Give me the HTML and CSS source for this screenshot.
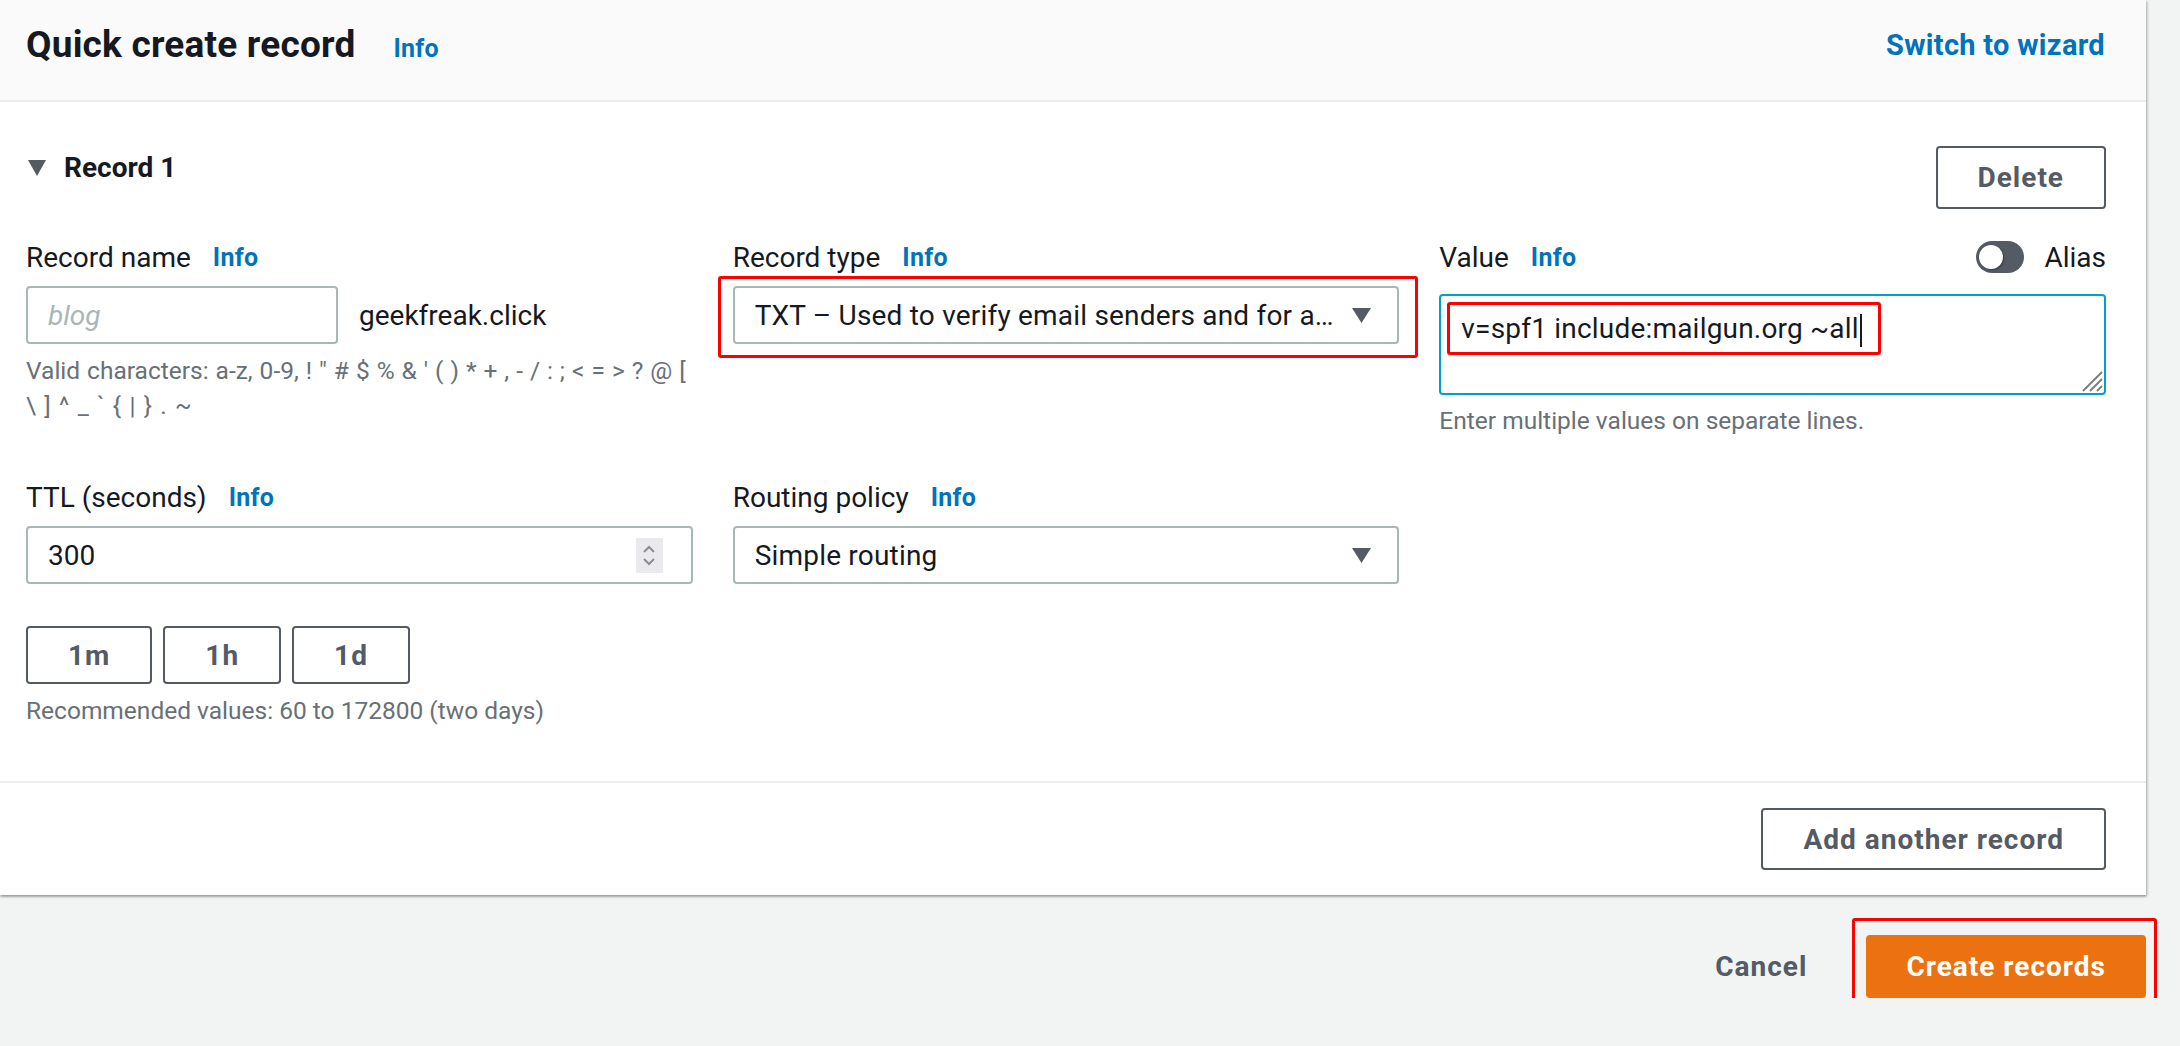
FILE: index.html
```html
<!DOCTYPE html>
<html lang="en">
<head>
<meta charset="utf-8">
<title>Quick create record</title>
<link rel="stylesheet" href="styles.css">
</head>
<body>
<div class="page">
  <section class="card">
    <header class="card-header">
      <div class="title-group">
        <h2 class="title">Quick create record</h2>
        <a class="info info-title">Info</a>
      </div>
      <a class="link-strong">Switch to wizard</a>
    </header>

    <div class="card-body">
      <div class="record-head">
        <div class="record-title">
          <svg class="expand-caret" width="18" height="16" viewBox="0 0 18 16"><polygon points="0,0 18,0 9,16" fill="#545b64"/></svg>
          <span>Record 1</span>
        </div>
        <button class="btn btn-lg">Delete</button>
      </div>

      <div class="form-grid">
        <div class="field">
          <div class="label-row"><span class="label">Record name</span><a class="info">Info</a></div>
          <div class="control name-row">
            <div class="input name-input"><span class="placeholder">blog</span></div>
            <span class="domain">geekfreak.click</span>
          </div>
          <p class="help help-chars"><span class="help-line">Valid characters: a-z, 0-9, ! " # $ % &amp; ' ( ) * + , - / : ; &lt; = &gt; ? @ [</span><span class="help-line">\ ] ^ _ ` { | } . ~</span></p>
        </div>

        <div class="field">
          <div class="label-row"><span class="label">Record type</span><a class="info">Info</a></div>
          <div class="control annotated">
            <div class="select">
              <span class="select-text">TXT – Used to verify email senders and for a…</span>
              <svg class="select-caret" width="19" height="15" viewBox="0 0 19 15"><polygon points="0,0 19,0 9.5,15" fill="#545b64"/></svg>
            </div>
            <span class="annot annot-select"></span>
          </div>
        </div>

        <div class="field">
          <div class="label-row value-row">
            <div class="label-group"><span class="label">Value</span><a class="info">Info</a></div>
            <div class="alias-group"><span class="toggle"></span><span class="alias">Alias</span></div>
          </div>
          <div class="textarea">
            <span class="ta-text">v=spf1 include:mailgun.org ~all</span><span class="cursor"></span>
            <span class="annot annot-value"></span>
            <svg class="resize" width="24" height="24" viewBox="0 0 24 24"><path d="M23 4 L4 23 M23 11 L11 23 M23 18 L18 23" stroke="#7b7f85" stroke-width="2" fill="none"/></svg>
          </div>
          <p class="help help-value">Enter multiple values on separate lines.</p>
        </div>

        <div class="field">
          <div class="label-row"><span class="label">TTL (seconds)</span><a class="info">Info</a></div>
          <div class="control">
            <div class="input ttl-input">
              <span>300</span>
              <span class="spinner">
                <svg width="12" height="8" viewBox="0 0 12 8"><polyline points="1,7 6,2 11,7" fill="none" stroke="#8c8c96" stroke-width="2"/></svg>
                <svg width="12" height="8" viewBox="0 0 12 8"><polyline points="1,1 6,6 11,1" fill="none" stroke="#8c8c96" stroke-width="2"/></svg>
              </span>
            </div>
          </div>
          <div class="quick">
            <button class="btn btn-sm">1m</button>
            <button class="btn btn-sm">1h</button>
            <button class="btn btn-sm">1d</button>
          </div>
          <p class="help">Recommended values: 60 to 172800 (two days)</p>
        </div>

        <div class="field">
          <div class="label-row"><span class="label">Routing policy</span><a class="info">Info</a></div>
          <div class="control">
            <div class="select">
              <span class="select-text">Simple routing</span>
              <svg class="select-caret" width="19" height="15" viewBox="0 0 19 15"><polygon points="0,0 19,0 9.5,15" fill="#545b64"/></svg>
            </div>
          </div>
        </div>
      </div>
    </div>

    <div class="card-foot">
      <button class="btn btn-add">Add another record</button>
    </div>
  </section>

  <div class="actions">
    <button class="btn-link">Cancel</button>
    <span class="primary-wrap">
      <button class="btn-primary">Create records</button>
      <span class="annot annot-create"></span>
    </span>
  </div>
</div>
</body>
</html>
```

FILE: styles.css
```css
* { box-sizing: border-box; }

body {
  margin: 0;
  background: #f2f3f3;
  font-family: Roboto, "Liberation Sans", Arial, sans-serif;
  color: #16191f;
}

.page { width: 2146px; }

.card {
  background: #ffffff;
  box-shadow: 0 2px 2px rgba(0, 28, 36, 0.3), 2px 1px 2px rgba(0, 28, 36, 0.15);
}

.card-header {
  height: 102px;
  background: #fafafa;
  border-bottom: 2px solid #eaeded;
  display: flex;
  align-items: center;
  justify-content: space-between;
  padding: 0 41px 10px 26px;
}

.title-group { display: flex; align-items: baseline; gap: 38px; }

.title {
  margin: 0;
  font-size: 37px;
  font-weight: 700;
  line-height: 44px;
  letter-spacing: 0.2px;
}

.info {
  font-size: 25px;
  font-weight: 700;
  color: #0073bb;
  text-decoration: none;
  letter-spacing: 0.3px;
}

.link-strong {
  font-size: 29px;
  font-weight: 700;
  color: #0073bb;
  letter-spacing: 0.3px;
}

.card-body { padding: 44px 40px 53px 26px; }

.record-head {
  display: flex;
  justify-content: space-between;
  align-items: flex-start;
}

.record-title {
  display: flex;
  align-items: center;
  gap: 18px;
  padding-left: 2px;
  font-size: 28px;
  font-weight: 700;
  line-height: 44px;
}

.btn {
  display: inline-flex;
  align-items: center;
  justify-content: center;
  padding: 0 40px;
  border: 2px solid #545b64;
  border-radius: 4px;
  background: #ffffff;
  color: #545b64;
  font-family: Roboto, "Liberation Sans", Arial, sans-serif;
  font-size: 28px;
  font-weight: 700;
  letter-spacing: 1px;
}
.btn-lg { height: 63px; }
.btn-sm { height: 58px; }
.btn-add { height: 62px; }

.form-grid {
  margin-top: 28px;
  display: grid;
  grid-template-columns: repeat(3, minmax(0, 1fr));
  column-gap: 40px;
  row-gap: 39px;
}

.field { min-width: 0; }

.label-row {
  height: 40px;
  display: flex;
  align-items: center;
  gap: 22px;
  font-size: 28px;
}

.value-row { justify-content: space-between; }
.label-group { display: flex; align-items: center; gap: 22px; }
.alias-group { display: flex; align-items: center; gap: 20px; }

.toggle {
  position: relative;
  width: 48px;
  height: 32px;
  border-radius: 16px;
  background: #545b64;
}
.toggle::before {
  content: "";
  position: absolute;
  left: 3px;
  top: 4px;
  width: 24px;
  height: 24px;
  border-radius: 50%;
  background: #ffffff;
  box-shadow: 1px 1px 2px rgba(0, 0, 0, 0.35);
}

.control { margin-top: 9px; }
.annotated { position: relative; }

.input, .select {
  height: 58px;
  border: 2px solid #aab7b8;
  border-radius: 4px;
  display: flex;
  align-items: center;
  padding: 0 20px;
  font-size: 28px;
  background: #ffffff;
}

.name-row { display: flex; align-items: center; }
.name-input { width: 312px; }
.placeholder { color: #aab7b8; font-style: italic; }
.domain { margin-left: 21px; font-size: 28px; }

.select { justify-content: space-between; padding-right: 26px; }
.select-text { white-space: nowrap; overflow: hidden; text-overflow: ellipsis; letter-spacing: 0.2px; }
.select-caret { flex: none; margin-left: 12px; }

.ttl-input { justify-content: space-between; padding-right: 28px; }
.spinner {
  width: 27px;
  height: 35px;
  background: #e9e9ee;
  display: flex;
  flex-direction: column;
  align-items: center;
  justify-content: center;
  gap: 5px;
}

.textarea {
  position: relative;
  margin-top: 17px;
  height: 101px;
  border: 2px solid #00a1c9;
  border-radius: 4px;
  padding: 11px 20px;
  font-size: 28px;
  line-height: 44px;
}
.ta-text { letter-spacing: 0.2px; }
.cursor {
  display: inline-block;
  width: 2px;
  height: 33px;
  background: #16191f;
  vertical-align: middle;
  margin-left: 1px;
}
.resize { position: absolute; right: 1px; bottom: 1px; }

.help {
  margin: 9px 0 0;
  font-size: 24.5px;
  line-height: 35px;
  color: #687078;
}
.help-chars { word-spacing: 0.9px; }
.help-value { margin-top: 8px; }
.help-line { display: block; white-space: nowrap; }
.help-line + .help-line { word-spacing: 2.2px; }

.quick { margin-top: 42px; display: flex; gap: 11px; }

.card-foot {
  border-top: 2px solid #eaeded;
  padding: 25px 40px;
  display: flex;
  justify-content: flex-end;
}

.actions {
  margin-top: 40px;
  display: flex;
  justify-content: flex-end;
  align-items: center;
  gap: 39px;
}

.btn-link {
  padding: 0 20px;
  border: none;
  background: none;
  color: #545b64;
  font-family: Roboto, "Liberation Sans", Arial, sans-serif;
  font-size: 28px;
  font-weight: 700;
  letter-spacing: 1px;
}

.primary-wrap { position: relative; display: inline-flex; }

.btn-primary {
  height: 63px;
  padding: 0 40px;
  border: none;
  border-radius: 4px;
  background: #ec7211;
  color: #ffffff;
  font-family: Roboto, "Liberation Sans", Arial, sans-serif;
  font-size: 28px;
  font-weight: 700;
  letter-spacing: 1px;
}

.annot {
  position: absolute;
  border: 3px solid #ff0000;
  border-radius: 3px;
  pointer-events: none;
}
.annot-select { left: -15px; top: -10px; right: -19px; bottom: -14px; }
.annot-value { left: 6px; top: 6px; width: 434px; height: 53px; }
.annot-create { left: -14px; top: -17px; right: -11px; bottom: -20px; }
```
